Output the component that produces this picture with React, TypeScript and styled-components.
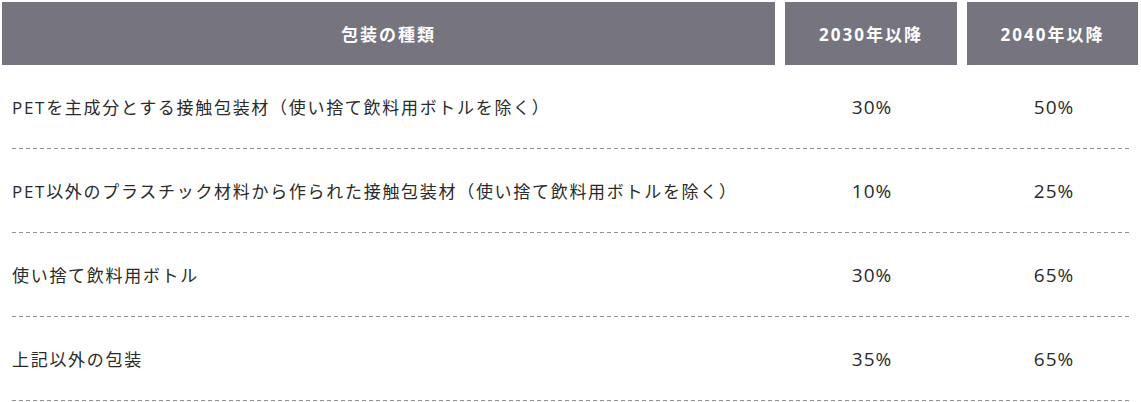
import React from "react";
import styled, { createGlobalStyle } from "styled-components";

const GlobalStyle = createGlobalStyle`
  html, body {
    margin: 0;
    padding: 0;
    background: #ffffff;
  }
  body {
    font-family: "Open Sans", "Noto Sans CJK JP", sans-serif;
    color: #2a2a2a;
  }
`;

const Table = styled.div`
  width: 1141px;
  padding-top: 2px;
  box-sizing: border-box;
`;

const HeaderRow = styled.div`
  display: grid;
  grid-template-columns: 773px 172px 171px;
  column-gap: 10px;
  margin: 0 2px;
  height: 63px;
`;

const HeaderCell = styled.div`
  background: #75747f;
  color: #ffffff;
  font-weight: 700;
  font-size: 17px;
  letter-spacing: 2px;
  display: flex;
  align-items: center;
  justify-content: center;
`;

const BodyRow = styled.div`
  display: grid;
  grid-template-columns: 763px 172px 163px;
  column-gap: 10px;
  margin: 0 11px 0 12px;
  height: 83px;
  padding-bottom: 1px;
  background-image: repeating-linear-gradient(
    to right,
    #8f8f95 0,
    #8f8f95 4px,
    transparent 4px,
    transparent 7px
  );
  background-size: 100% 1px;
  background-position: left bottom;
  background-repeat: no-repeat;
`;

const NameCell = styled.div`
  display: flex;
  align-items: center;
  font-size: 17px;
  letter-spacing: 1.7px;
  color: #2a2a2a;
  padding-bottom: 1px;
`;

const ValueCell = styled.div<{ $shift?: number }>`
  display: flex;
  align-items: center;
  justify-content: center;
  font-size: 19px;
  letter-spacing: 1px;
  color: #2a2a2a;
  padding-left: ${(p) => p.$shift ?? 0}px;
`;

const rows = [
  { name: "PETを主成分とする接触包装材（使い捨て飲料用ボトルを除く）", a: "30%", b: "50%" },
  { name: "PET以外のプラスチック材料から作られた接触包装材（使い捨て飲料用ボトルを除く）", a: "10%", b: "25%" },
  { name: "使い捨て飲料用ボトル", a: "30%", b: "65%" },
  { name: "上記以外の包装", a: "35%", b: "65%" },
];

export default function App() {
  return (
    <>
      <GlobalStyle />
      <Table>
        <HeaderRow>
          <HeaderCell>包装の種類</HeaderCell>
          <HeaderCell>2030年以降</HeaderCell>
          <HeaderCell>2040年以降</HeaderCell>
        </HeaderRow>
        {rows.map((r) => (
          <BodyRow key={r.name}>
            <NameCell>{r.name}</NameCell>
            <ValueCell $shift={2}>{r.a}</ValueCell>
            <ValueCell $shift={11}>{r.b}</ValueCell>
          </BodyRow>
        ))}
      </Table>
    </>
  );
}
